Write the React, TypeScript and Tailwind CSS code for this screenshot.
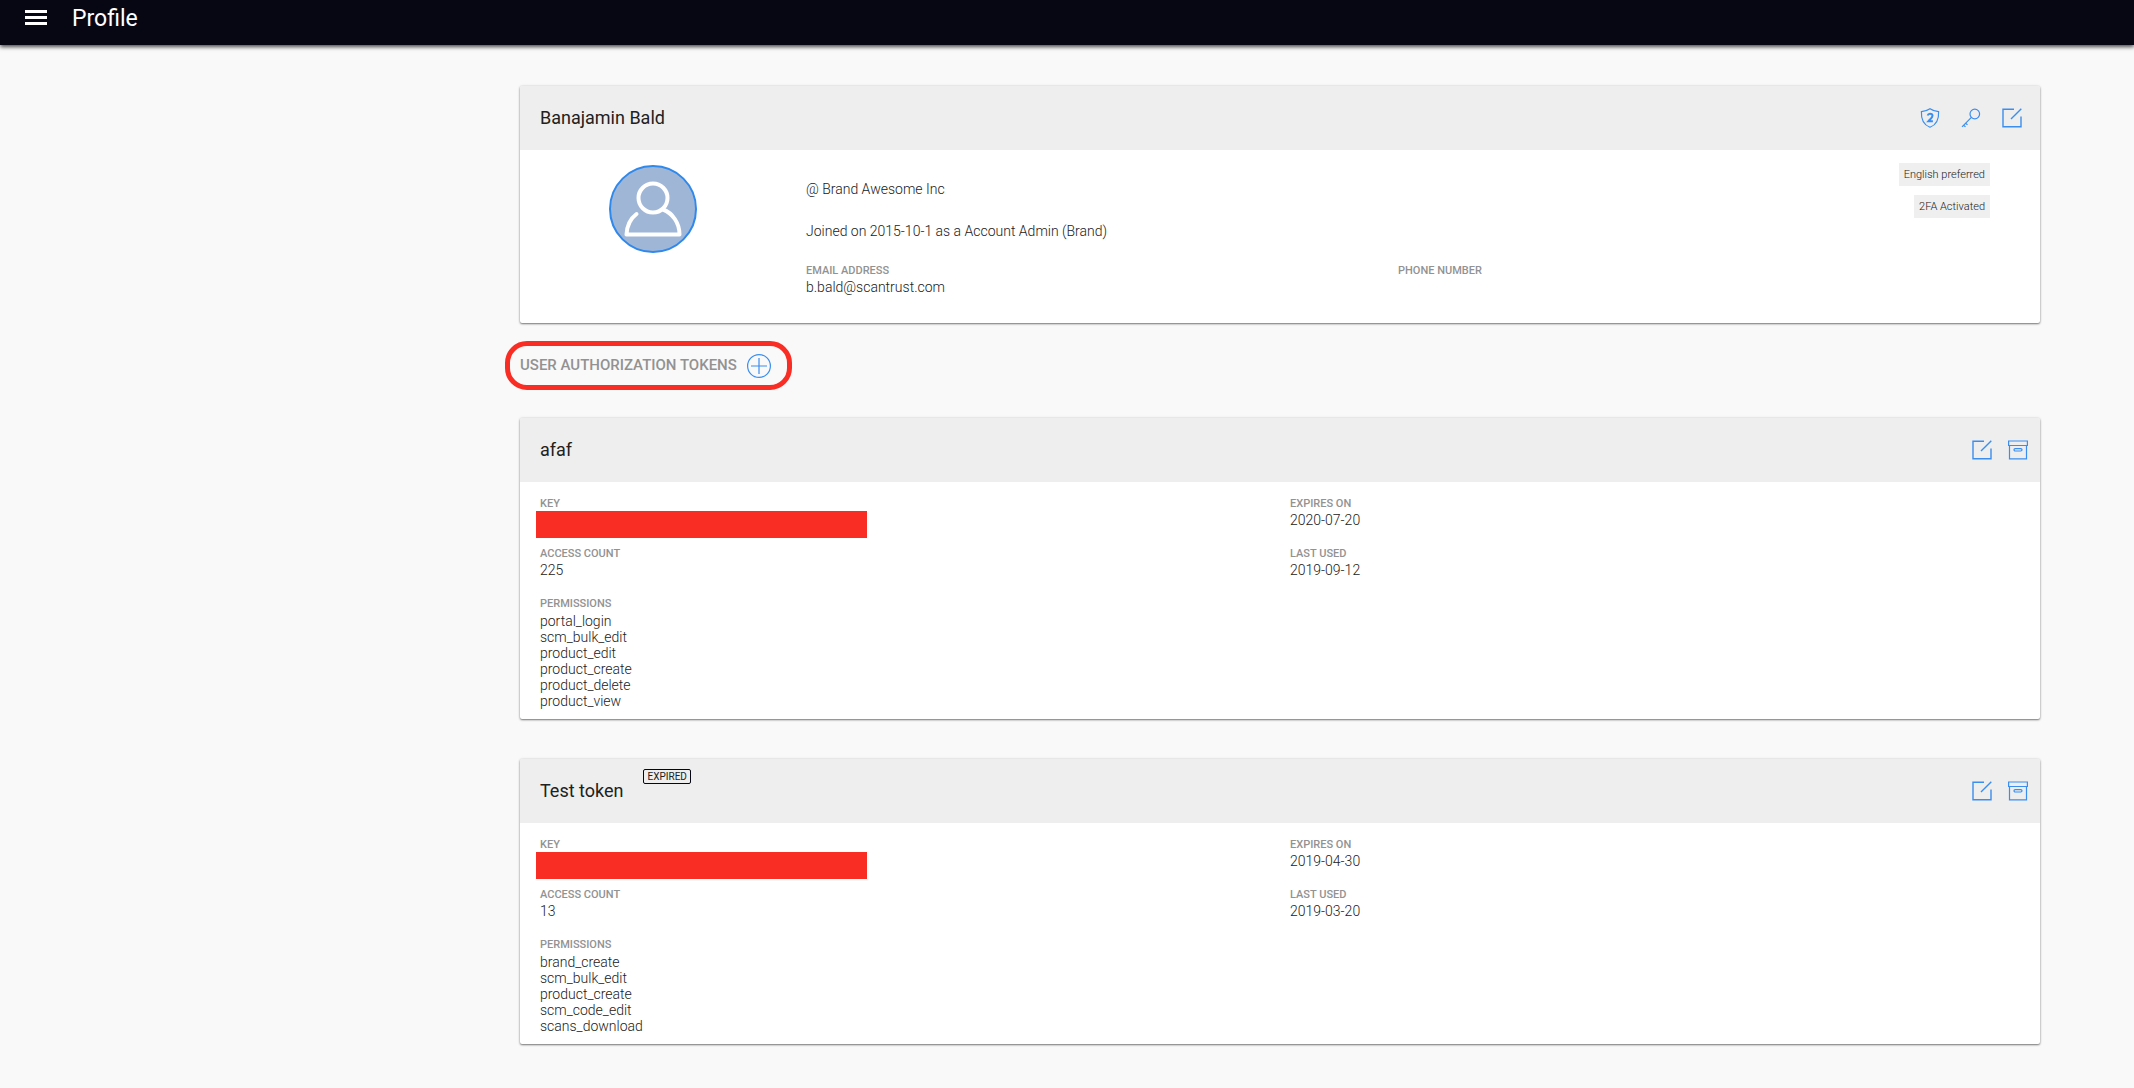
import type { ReactNode } from 'react'

interface Token {
  name: string
  expired?: boolean
  accessCount: number
  expiresOn: string
  lastUsed: string
  permissions: string[]
}

const tokens: Token[] = [
  {
    name: 'afaf',
    accessCount: 225,
    expiresOn: '2020-07-20',
    lastUsed: '2019-09-12',
    permissions: ['portal_login', 'scm_bulk_edit', 'product_edit', 'product_create', 'product_delete', 'product_view'],
  },
  {
    name: 'Test token',
    expired: true,
    accessCount: 13,
    expiresOn: '2019-04-30',
    lastUsed: '2019-03-20',
    permissions: ['brand_create', 'scm_bulk_edit', 'product_create', 'scm_code_edit', 'scans_download'],
  },
]

const EditIcon = () => (
  <svg className="size-5" viewBox="0 0 20 20" fill="none" stroke="currentColor" strokeWidth="1.4">
    <path d="M12 1.2H1v17.6h18V8.5M19.3.7L9 11" />
  </svg>
)

const ArchiveIcon = () => (
  <svg className="size-5" viewBox="0 0 20 20" fill="none" stroke="currentColor" strokeWidth="1.2">
    <path d="M.6 1h18.8v4.5H.6zM1.5 5.5v13.3h17V5.5" />
    <rect x="6" y="8.6" width="8" height="2.4" rx="1.2" />
  </svg>
)

const KeyIcon = () => (
  <svg className="size-5" viewBox="0 0 20 20" fill="none" stroke="currentColor" strokeWidth="1.2">
    <circle cx="13.8" cy="6" r="4.8" />
    <path d="M10.4 9.4L1 18.8M2.6 17.2l1.9 1.7M4.6 15.2l1.9 1.7" />
  </svg>
)

const ShieldIcon = () => (
  <svg className="size-5" viewBox="0 0 20 20" fill="none" stroke="currentColor" strokeWidth="1.2">
    <path d="M10 .8c2.4 1.8 5 2.6 8.6 2.8C19 11 16.5 16.8 10 19.3 3.5 16.8 1 11 1.4 3.6 5 3.4 7.6 2.6 10 .8z" />
    <path d="M7.600 7.500c.4-1.300 1.300-1.800 2.400-1.800 1.500 0 2.500.9 2.500 2.100 0 1.700-2.200 3.200-4.200 5.500h4.600" strokeWidth="2" />
  </svg>
)

const PlusIcon = () => (
  <svg className="size-6" viewBox="0 0 24 24" fill="none" stroke="currentColor" strokeWidth="1.2">
    <circle cx="12" cy="12" r="11.4" />
    <path d="M12 4v16M4 12h16" />
  </svg>
)

function IconButton({ label, children }: { label: string; children: ReactNode }) {
  return (
    <button type="button" aria-label={label} className="block cursor-pointer text-[#3a8ef0]">
      {children}
    </button>
  )
}

function Card({ title, actions, children }: { title: ReactNode; actions: ReactNode; children: ReactNode }) {
  return (
    <section className="overflow-hidden rounded-xs bg-white shadow-[0_1px_2px_rgba(0,0,0,0.5),0_0_3px_rgba(0,0,0,0.12)]">
      <header className="flex h-16 items-center justify-between bg-[#eeeeee] pl-5">
        {title}
        {actions}
      </header>
      {children}
    </section>
  )
}

function Field({ label, children }: { label: string; children?: ReactNode }) {
  return (
    <div>
      <dt className="text-[11px] leading-4 font-medium text-[#929292] uppercase">{label}</dt>
      <dd className="min-h-4 leading-4">{children}</dd>
    </div>
  )
}

function Badge({ children }: { children: ReactNode }) {
  return <span className="bg-[#efefef] px-[5px] text-[11px] leading-[23px] text-[#212121]">{children}</span>
}

function TokenCard({ token }: { token: Token }) {
  return (
    <Card
      title={
        <div className="flex items-start gap-5 self-stretch">
          <h2 className="self-center text-lg font-normal text-[#212121]">{token.name}</h2>
          {token.expired && (
            <span className="mt-2.5 rounded-xs border border-[#070714] px-[3px] text-[10px] leading-[13px] font-normal text-[#212121]">
              EXPIRED
            </span>
          )}
        </div>
      }
      actions={
        <div className="flex gap-4 pr-3">
          <IconButton label="Edit token"><EditIcon /></IconButton>
          <IconButton label="Archive token"><ArchiveIcon /></IconButton>
        </div>
      }
    >
      <dl className="grid grid-cols-2 gap-y-[18px] pt-3.5 pb-2.5 pl-5">
        <Field label="Key">
          {/* key value stays masked */}
          <div className="-mt-px -mb-2.5 -ml-1 h-[27px] w-[331px] bg-[#f92d23]" />
        </Field>
        <Field label="Expires on">{token.expiresOn}</Field>
        <Field label="Access count">{token.accessCount}</Field>
        <Field label="Last used">{token.lastUsed}</Field>
        <Field label="Permissions">
          <ul className="pt-px">
            {token.permissions.map((p) => (
              <li key={p}>{p}</li>
            ))}
          </ul>
        </Field>
      </dl>
    </Card>
  )
}

export default function App() {
  return (
    <div className="min-h-screen bg-[#f9f9f9] font-[Roboto,sans-serif] text-sm font-light text-[#212121]">
      <header className="flex h-[45px] items-start gap-[25px] bg-[#070714] pl-[25px] text-white shadow-[0_2px_4px_rgba(0,0,0,0.7)]">
        <button type="button" aria-label="Menu" className="mt-2.5 cursor-pointer">
          <svg className="h-[15px] w-[22px]" viewBox="0 0 22 15" fill="currentColor">
            <path d="M0 0h22v3H0zM0 6h22v3H0zM0 12h22v3H0z" />
          </svg>
        </button>
        <h1 className="mt-[5px] text-[23px] leading-7 font-normal">Profile</h1>
      </header>

      <main className="pt-[41px] pr-[94px] pb-10 pl-[520px]">
        <Card
          title={<h2 className="text-lg font-normal">Banajamin Bald</h2>}
          actions={
            <div className="flex gap-[21px] pr-[18px]">
              <IconButton label="Two-factor authentication"><ShieldIcon /></IconButton>
              <IconButton label="Change password"><KeyIcon /></IconButton>
              <IconButton label="Edit profile"><EditIcon /></IconButton>
            </div>
          }
        >
          <div className="flex gap-5 pr-[50px] pb-7">
            <div className="flex w-[266px] shrink-0 justify-center pt-[15px]">
              <svg className="size-[88px]" viewBox="0 0 88 88" fill="none">
                <circle cx="44" cy="44" r="43" fill="#9fb6d7" stroke="#2f88ec" strokeWidth="2" />
                <g stroke="#fff" strokeWidth="4" strokeLinecap="round" strokeLinejoin="round">
                  <circle cx="44" cy="33" r="14.5" />
                  <path d="M27.500 49C21.500 53.500 18 60 17.500 69.500h53C70.500 58 63.500 48 54 44.500" />
                </g>
              </svg>
            </div>
            <div className="grow">
              <div className="flex justify-between">
                <div className="pt-[29px]">
                  <p className="leading-5">@ Brand Awesome Inc</p>
                  <p className="mt-[22px] leading-5">Joined on 2015-10-1 as a Account Admin (Brand)</p>
                </div>
                <div className="flex flex-col items-end gap-[9px] pt-[13px]">
                  <Badge>English preferred</Badge>
                  <Badge>2FA Activated</Badge>
                </div>
              </div>
              <dl className="mt-[22px] grid grid-cols-2">
                <Field label="Email address">b.bald@scantrust.com</Field>
                <Field label="Phone number" />
              </dl>
            </div>
          </div>
        </Card>

        <div className="mt-[18px] -ml-[15px] flex h-[49px] w-fit items-center gap-2.5 rounded-[22px] border-5 border-[#f92d23] pr-4 pl-2.5">
          <h2 className="text-[15px] font-medium text-[#929292]">USER AUTHORIZATION TOKENS</h2>
          <IconButton label="Add token"><PlusIcon /></IconButton>
        </div>

        <div className="mt-7 flex flex-col gap-10">
          {tokens.map((t) => (
            <TokenCard key={t.name} token={t} />
          ))}
        </div>
      </main>
    </div>
  )
}
